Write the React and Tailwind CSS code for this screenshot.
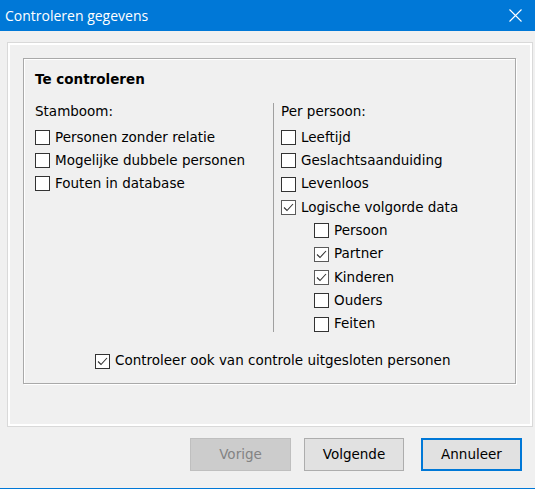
import React from "react";

const body = { fontFamily: '"DejaVu Sans", Verdana, sans-serif' };

function Box({ checked, dim }) {
  return (
    <span
      className={
        "w-[15px] h-[15px] bg-white border shrink-0 flex items-center justify-center " +
        (dim ? "border-[#5a5a5a]" : "border-[#333333]")
      }
    >
      {checked && (
        <svg width="13" height="13" viewBox="0 0 13 13">
          <polyline points="2,6.5 5,9.5 11,3" fill="none" stroke="#333" strokeWidth="1.1" />
        </svg>
      )}
    </span>
  );
}

function Row({ label, checked, dim, h = "h-[23px]" }) {
  return (
    <div className={"flex items-center gap-[5px] " + h}>
      <Box checked={checked} dim={dim} />
      <span className="leading-none">{label}</span>
    </div>
  );
}

function Btn({ children, disabled, focus }) {
  let cls = "h-[33px] flex items-center justify-center ";
  if (disabled) cls += "bg-[#cccccc] border border-[#bfbfbf] text-[#838383]";
  else if (focus) cls += "bg-[#e1e1e1] border-2 border-[#0078d7] text-black";
  else cls += "bg-[#e1e1e1] border border-[#adadad] text-black";
  return <div className={cls}>{children}</div>;
}

export default function App() {
  return (
    <div className="w-[535px] h-[489px] bg-[#f0f0f0] border-b border-[#0078d7] flex flex-col text-[13.5px] text-black" style={body}>
      <div className="h-[31px] bg-[#0078d7] flex items-center justify-between pl-[5px] pr-[13px] text-white shrink-0">
        <span className="text-[14px] font-normal" style={{ fontFamily: '"Open Sans", "Noto Sans", sans-serif' }}>
          Controleren gegevens
        </span>
        <svg width="13" height="13" viewBox="0 0 13 13">
          <path d="M0.5 0.5 L12.5 12.5 M12.5 0.5 L0.5 12.5" stroke="#fff" strokeWidth="1.1" />
        </svg>
      </div>

      <div className="mt-[11px] ml-[7px] w-[526px] h-[385px] border border-[#d9d9d9]">
        <div className="h-full border-2 border-white p-[13px]">
          <div className="w-[493px] h-[326px] border border-[#a9a9a9] shadow-[1px_1px_0_#fff,inset_1px_1px_0_#fff] pl-[11px] pt-[10px] flex flex-col">
            <div className="font-bold h-[20px] flex items-center">Te controleren</div>
            <div className="flex mt-[12px]">
              <div className="w-[238px]">
                <div className="h-[20px] flex items-center mb-[5px]">Stamboom:</div>
                <Row label="Personen zonder relatie" />
                <Row label="Mogelijke dubbele personen" />
                <Row label="Fouten in database" />
              </div>
              <div className="w-px bg-[#a0a0a0] mt-[2px] mb-[4px]" />
              <div className="pl-[7px]">
                <div className="h-[20px] flex items-center mb-[5px]">Per persoon:</div>
                <Row h="h-[23.3px]" label="Leeftijd" />
                <Row h="h-[23.3px]" label="Geslachtsaanduiding" />
                <Row h="h-[23.3px]" label="Levenloos" />
                <Row h="h-[23.3px]" label="Logische volgorde data" checked dim />
                <div className="pl-[33px]">
                  <Row h="h-[23.3px]" label="Persoon" />
                  <Row h="h-[23.3px]" label="Partner" checked dim />
                  <Row h="h-[23.3px]" label="Kinderen" checked dim />
                  <Row h="h-[23.3px]" label="Ouders" />
                  <Row h="h-[23.3px]" label="Feiten" />
                </div>
              </div>
            </div>
            <div className="pl-[60px] mt-[14px]">
              <Row label="Controleer ook van controle uitgesloten personen" checked />
            </div>
          </div>
        </div>
      </div>

      <div className="flex mt-[11px] pl-[190px]">
        <div className="w-[101px]">
          <Btn disabled>Vorige</Btn>
        </div>
        <div className="w-[100px] ml-[13px]">
          <Btn>Volgende</Btn>
        </div>
        <div className="w-[101px] ml-[17px]">
          <Btn focus>Annuleer</Btn>
        </div>
      </div>
    </div>
  );
}
